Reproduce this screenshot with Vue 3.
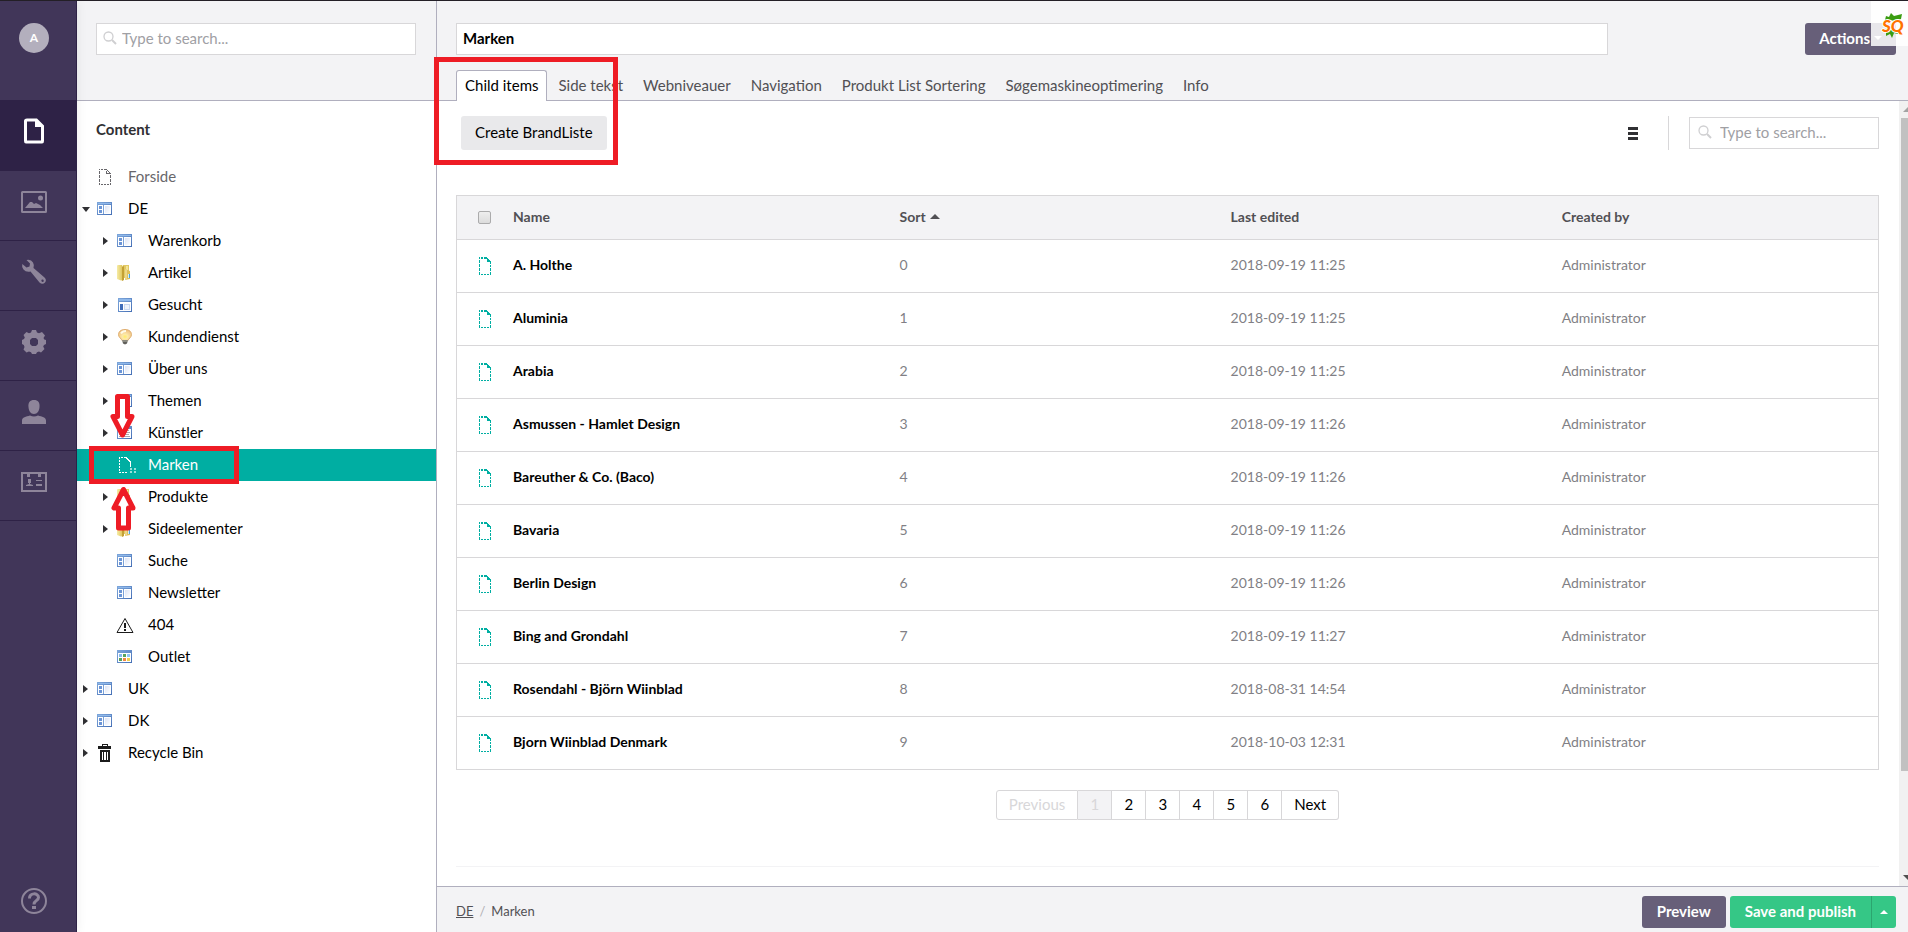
<script setup>
import { ref } from 'vue'

const sections = [
  { id: 'content', label: 'Content' },
  { id: 'media', label: 'Media' },
  { id: 'wrench', label: 'Settings' },
  { id: 'gear', label: 'Developer' },
  { id: 'user', label: 'Users' },
  { id: 'member', label: 'Members' }
]
const activeSection = ref('content')

const tree = [
  { name: 'Forside', icon: 'page', level: 1, muted: true },
  { name: 'DE', icon: 'site', level: 1, state: 'open' },
  { name: 'Warenkorb', icon: 'site', level: 2, state: 'closed' },
  { name: 'Artikel', icon: 'folder', level: 2, state: 'closed' },
  { name: 'Gesucht', icon: 'form', level: 2, state: 'closed' },
  { name: 'Kundendienst', icon: 'bulb', level: 2, state: 'closed' },
  { name: 'Über uns', icon: 'site', level: 2, state: 'closed' },
  { name: 'Themen', icon: 'site', level: 2, state: 'closed' },
  { name: 'Künstler', icon: 'text', level: 2, state: 'closed' },
  { name: 'Marken', icon: 'list', level: 2, selected: true },
  { name: 'Produkte', icon: 'folder', level: 2, state: 'closed' },
  { name: 'Sideelementer', icon: 'folder', level: 2, state: 'closed' },
  { name: 'Suche', icon: 'site', level: 2 },
  { name: 'Newsletter', icon: 'site', level: 2 },
  { name: '404', icon: 'warning', level: 2 },
  { name: 'Outlet', icon: 'apps', level: 2 },
  { name: 'UK', icon: 'site', level: 1, state: 'closed' },
  { name: 'DK', icon: 'site', level: 1, state: 'closed' },
  { name: 'Recycle Bin', icon: 'trash', level: 1, state: 'closed' }
]

const tabs = ['Child items', 'Side tekst', 'Webniveauer', 'Navigation', 'Produkt List Sortering', 'Søgemaskineoptimering', 'Info']
const activeTab = ref('Child items')
const nodeName = ref('Marken')

const items = [
  ['A. Holthe', '2018-09-19 11:25'],
  ['Aluminia', '2018-09-19 11:25'],
  ['Arabia', '2018-09-19 11:25'],
  ['Asmussen - Hamlet Design', '2018-09-19 11:26'],
  ['Bareuther & Co. (Baco)', '2018-09-19 11:26'],
  ['Bavaria', '2018-09-19 11:26'],
  ['Berlin Design', '2018-09-19 11:26'],
  ['Bing and Grondahl', '2018-09-19 11:27'],
  ['Rosendahl - Björn Wiinblad', '2018-08-31 14:54'],
  ['Bjorn Wiinblad Denmark', '2018-10-03 12:31']
]
</script>

<template>
  <div class="app">
    <svg class="defs" aria-hidden="true">
      <defs>
        <linearGradient id="g-pane" x1="0" y1="0" x2="1" y2="1">
          <stop offset="0" stop-color="#dbe3f5" /><stop offset="1" stop-color="#ffffff" />
        </linearGradient>
        <linearGradient id="g-frame" x1="0" y1="0" x2="1" y2="1">
          <stop offset="0" stop-color="#7fa8dc" /><stop offset="1" stop-color="#456fb5" />
        </linearGradient>
        <linearGradient id="g-folder" x1="0" y1="0" x2="1" y2="0">
          <stop offset="0" stop-color="#f6eca6" /><stop offset="1" stop-color="#dcc052" />
        </linearGradient>
        <radialGradient id="g-bulb" cx=".5" cy=".65" r=".6">
          <stop offset="0" stop-color="#ffee66" /><stop offset=".35" stop-color="#fde9a8" /><stop offset="1" stop-color="#efc183" />
        </radialGradient>
      </defs>

      <symbol id="i-site" viewBox="0 0 16 16">
        <g shape-rendering="crispEdges">
          <rect x="0" y="1" width="15" height="13" fill="url(#g-frame)" />
          <rect x="1" y="2" width="13" height="1" fill="#8fb8ea" />
          <rect x="1" y="4" width="13" height="9" fill="#fff" />
          <rect x="2" y="5" width="3" height="3" fill="#6b95d6" />
          <rect x="2" y="9" width="3" height="3" fill="#6b95d6" />
          <rect x="6" y="4" width="1" height="9" fill="#7ba2d8" />
          <rect x="8" y="5" width="5" height="7" fill="url(#g-pane)" />
        </g>
      </symbol>
      <symbol id="i-form" viewBox="0 0 16 16">
        <g shape-rendering="crispEdges">
          <rect x="1" y="1" width="14" height="14" fill="url(#g-frame)" />
          <rect x="2" y="2" width="12" height="2" fill="#8fb8ea" />
          <rect x="2" y="5" width="12" height="9" fill="#fff" />
          <rect x="3" y="7" width="3" height="6" fill="#3f6cb8" />
          <rect x="7" y="7" width="6" height="6" fill="#c9d8f0" />
          <rect x="8" y="8" width="4" height="4" fill="#eef3fb" />
        </g>
      </symbol>
      <symbol id="i-text" viewBox="0 0 16 16">
        <g shape-rendering="crispEdges">
          <rect x="0" y="1" width="15" height="13" fill="url(#g-frame)" />
          <rect x="1" y="4" width="13" height="9" fill="#fff" />
          <path d="M2 5h10v1H2zM2 7h11v1H2zM2 9h10v1H2zM2 11h11v1H2z" fill="#a9a9ae" />
        </g>
      </symbol>
      <symbol id="i-apps" viewBox="0 0 16 16">
        <g shape-rendering="crispEdges">
          <rect x="0" y="1" width="15" height="13" fill="url(#g-frame)" />
          <rect x="1" y="4" width="13" height="9" fill="#fff" />
          <rect x="2" y="5" width="3" height="3" fill="#85baf0" />
          <rect x="6" y="5" width="3" height="3" fill="#58a35b" />
          <rect x="10" y="5" width="3" height="3" fill="#8fc6f5" />
          <rect x="2" y="9" width="3" height="3" fill="#58a35b" />
          <rect x="6" y="9" width="3" height="3" fill="#f28645" />
          <rect x="10" y="9" width="3" height="3" fill="#f3cf4b" />
        </g>
      </symbol>
      <symbol id="i-folder" viewBox="0 0 16 16">
        <path d="M6 0H12V13H6z" fill="#e2c964" />
        <path d="M9 1H11V12H9z" fill="#f3e59a" />
        <path d="M0 1Q0 0 1 0H5L6 2V15L4 15.500 0 14z" fill="url(#g-folder)" />
        <path d="M5 2L7 1V15L5 16z" fill="#c3a035" />
        <path d="M8 4L13 6V14L8 15z" fill="#dfc05a" />
        <path d="M8 4L10 5V14L8 15z" fill="#ecd789" />
        <rect x="11" y="9" width="2" height="4" fill="#4aa3dc" />
        <rect x="11" y="9" width="1" height="4" fill="#d4ecfa" />
      </symbol>
      <symbol id="i-bulb" viewBox="0 0 16 16">
        <path d="M8 .5C3.500 .5 1.500 3 1.500 5.500c0 3 3 4 3.500 6h6c.5-2 3.500-3 3.500-6 0-2.500-2-5-6.500-5z" fill="url(#g-bulb)" stroke="#dfae70" />
        <path d="M4 4.500C5 2.500 7 2 9 2" stroke="#fffbe8" stroke-width="2" fill="none" />
        <path d="M5 11h6l-1 3.500-2 1-2-1z" fill="#61605b" />
        <path d="M5 12h6" stroke="#b7b5a7" />
      </symbol>
      <symbol id="i-page" viewBox="0 0 16 18">
        <g shape-rendering="crispEdges" fill="currentColor">
          <path d="M2 1h1v1H2zM4 1h2v1H4zM7 1h2v1H7zM2 3h1v3H2zM2 7h1v3H2zM2 11h1v3H2zM2 15h1v2H2zM4 16h2v1H4zM7 16h2v1H7zM10 16h2v1h-2zM13 15h1v2h-1zM13 11h1v3h-1zM13 7h1v3h-1zM9 1h1v1H9zM10 2h1v1h-1zM11 3h1v1h-1zM12 4h1v1h-1zM9 3h1v3H9zM10 5h4v1h-4z" />
        </g>
      </symbol>
      <symbol id="i-doc" viewBox="0 0 12 18">
        <g shape-rendering="crispEdges" fill="currentColor">
          <path d="M0 0h1v2H0zM2 0h2v2H2zM5 0h3v2H5zM8 1h1v1H8zM8 2h2v1H8zM8 3h3v1H8zM8 4h4v1H8zM0 3h1v3H0zM0 7h1v3H0zM0 11h1v3H0zM0 15h1v3H0zM2 17h2v1H2zM5 17h2v1H5zM8 17h2v1H8zM11 5h1v2h-1zM11 8h1v2h-1zM11 11h1v3h-1zM11 15h1v3h-1z" />
        </g>
      </symbol>
      <symbol id="i-list" viewBox="0 0 20 18">
        <g shape-rendering="crispEdges" fill="currentColor">
          <path d="M2 1h1v2H2zM4 1h2v1H4zM7 1h2v1H7zM2 4h1v2H2zM2 7h1v2H2zM2 10h1v2H2zM2 13h1v2H2zM2 16h2v1H2zM5 16h2v1H5zM8 16h2v1H8zM9 1h1v2H9zM10 2h1v2h-1zM11 3h1v2h-1zM12 4h1v2h-1zM13 5h1v6h-1z" />
          <path opacity=".6" d="M13 12h2v2h-2zM13 15h2v2h-2zM17 12h2v2h-2zM17 15h2v2h-2z" />
        </g>
      </symbol>
      <symbol id="i-warning" viewBox="0 0 18 16">
        <path d="M9 1.500L17 15.500H1z" fill="none" stroke="#1b1b1b" />
        <path d="M8 6h2v5H8zM8 12h2v2H8z" fill="#1b1b1b" />
      </symbol>
      <symbol id="i-trash" viewBox="0 0 16 18">
        <path d="M5 0h6v2h3v3H1V2h4zM6 1v1h4V1zM3 6h10v12H3zM5 8v8h1V8zM7 8v8h2V8zM10 8v8h1V8z" fill="#1b1b1b" fill-rule="evenodd" shape-rendering="crispEdges" />
      </symbol>
      <symbol id="i-search" viewBox="0 0 14 14">
        <circle cx="5.500" cy="5.500" r="4.500" fill="none" stroke="#cfcfd1" stroke-width="1.300" />
        <path d="M9 9L13 13" stroke="#cfcfd1" stroke-width="2" />
      </symbol>

      <symbol id="s-content" viewBox="0 0 26 26">
        <path d="M6 .5H16L23 7.500V23Q23 25.500 21 25.500H5Q3 25.500 3 23V3Q3 .5 6 .5zM6 3.500V22.500H20V9H14V3.500z" fill="currentColor" fill-rule="evenodd" />
      </symbol>
      <symbol id="s-media" viewBox="0 0 26 26">
        <path d="M1.500 2h23Q26 2 26 3.500V22.500Q26 24 24.500 24h-23Q0 24 0 22.500V3.500Q0 2 1.500 2zM2 4V22H24V4z" fill="currentColor" fill-rule="evenodd" />
        <path d="M4 19L9 13 11 13 13 15 15 14 19 16 22 19z" fill="currentColor" />
        <circle cx="19.500" cy="9" r="2.500" fill="currentColor" />
      </symbol>
      <symbol id="s-wrench" viewBox="0 0 26 26">
        <path d="M5.500 1Q10 0 12 3.500 13.500 6 12.500 9L23.500 18.500Q26 21 24 23.500 21.500 26 18.500 23.500L9.500 12.500Q5 13.500 2.500 10.500 .5 8 1.300 5L5.500 8.500 8.500 7.500 9 4.500zM21.500 20.500a1.200 1.200 0 1 0 .1 2.400 1.200 1.200 0 0 0-.1-2.400z" fill="currentColor" fill-rule="evenodd" />
      </symbol>
      <symbol id="s-gear" viewBox="0 0 26 26">
        <path d="M11 1h4l1 2.500 2 .8L21 3l3 3.500-1.500 2.500.8 1.500L25 11v4l-2 1-.8 1.500L23.500 20 20 23.500 18 22.500l-2 .8L15 25h-4l-1-1.700-2-.8L5.500 23.500 2.500 20.500 3.500 18 2.800 16 1 15v-4l2-1 .8-1.500L2.500 6 5.500 3 8 4.300l2-.8zM11 9L9 11V15L11 17H15L17 15V11L15 9z" fill="currentColor" fill-rule="evenodd" />
      </symbol>
      <symbol id="s-user" viewBox="0 0 26 26">
        <path d="M13 1c4 0 6 2.500 5.500 7-.3 4-2 7-5.500 7S7.800 12 7.500 8C7 3.500 9 1 13 1zM9 16.500q4 2 8 0c4 1 8 2 8 5V25H1v-3.500c0-3 4-4 8-5z" fill="currentColor" />
      </symbol>
      <symbol id="s-member" viewBox="0 0 26 26">
        <path d="M0 3H26V23H0zM2 5V21H24V5H20V8H17V5H9V8H6V5z" fill="currentColor" fill-rule="evenodd" />
        <path d="M7 10h3v4H9v1l3 1v1H5v-1l3-1v-1H7zM15 11h6v1h-6zM15 15h6v2h-6z" fill="currentColor" />
      </symbol>
      <symbol id="s-help" viewBox="0 0 26 26">
        <circle cx="13" cy="13" r="12" fill="none" stroke="currentColor" stroke-width="2" />
        <path d="M8.500 10.500C8 4.500 17.500 4.500 17.500 9.500 17.500 13 13 12 13 16.500M11 19.500h4" fill="none" stroke="currentColor" stroke-width="3" />
      </symbol>
    </svg>

    <nav class="rail" aria-label="Sections">
      <div class="rail-top"><button class="avatar">A</button></div>
      <a v-for="s in sections" :key="s.id" href="#" class="rail-item" :class="{ active: s.id === activeSection }"
        :aria-label="s.label" @click.prevent="activeSection = s.id">
        <svg><use :href="'#s-' + s.id" /></svg>
      </a>
      <a href="#" class="rail-help" aria-label="Help"><svg><use href="#s-help" /></svg></a>
    </nav>

    <aside class="panel">
      <div class="panel-head">
        <label class="search">
          <svg><use href="#i-search" /></svg>
          <input type="text" placeholder="Type to search..." aria-label="Search content" />
        </label>
      </div>
      <h1>Content</h1>
      <ul class="tree">
        <li v-for="n in tree" :key="n.name" class="node" :class="['level-' + n.level, { selected: n.selected, muted: n.muted }]">
          <button v-if="n.state" class="toggle" :class="n.state" :aria-label="'Toggle ' + n.name">
            <svg v-if="n.state === 'open'" width="8" height="5"><path d="M0 0H8L4 5z" /></svg>
            <svg v-else width="5" height="8"><path d="M0 0L5 4 0 8z" /></svg>
          </button>
          <span v-else class="toggle"></span>
          <a href="#"><svg class="node-icon" :class="'icon-' + n.icon"><use :href="'#i-' + n.icon" /></svg><span>{{ n.name }}</span></a>
        </li>
      </ul>
    </aside>

    <main class="editor">
      <header class="editor-head">
        <div class="name-row">
          <input v-model="nodeName" class="name" type="text" aria-label="Name" />
          <button class="btn purple">Actions <svg width="8" height="4"><path d="M0 0H8L4 4z" /></svg></button>
        </div>
        <div class="tabs" role="tablist">
          <button v-for="t in tabs" :key="t" class="tab" role="tab" :class="{ active: t === activeTab }"
            :aria-selected="t === activeTab" @click="activeTab = t">{{ t }}</button>
        </div>
      </header>

      <div class="body">
        <div class="content">
          <div class="toolbar">
            <button class="create">Create BrandListe</button>
            <button class="layout" aria-label="List layout">
              <svg width="10" height="13"><path d="M0 0H10V3H0zM0 5H10V8H0zM0 10H10V13H0z" /></svg>
            </button>
            <span class="divider"></span>
            <label class="search list-search">
              <svg><use href="#i-search" /></svg>
              <input type="text" placeholder="Type to search..." aria-label="Search list" />
            </label>
          </div>

          <table>
            <thead>
              <tr>
                <th class="c-icon"><input type="checkbox" aria-label="Select all" /></th>
                <th class="c-name">Name</th>
                <th class="c-mid">Sort <svg width="10" height="5"><path d="M5 0L10 5H0z" /></svg></th>
                <th class="c-mid">Last edited</th>
                <th>Created by</th>
              </tr>
            </thead>
            <tbody>
              <tr v-for="(item, i) in items" :key="item[0]">
                <td class="c-icon"><svg class="doc"><use href="#i-doc" /></svg></td>
                <td><a href="#">{{ item[0] }}</a></td>
                <td>{{ i }}</td>
                <td>{{ item[1] }}</td>
                <td>Administrator</td>
              </tr>
            </tbody>
          </table>

          <nav class="pager" aria-label="Pages">
            <button class="wide" disabled>Previous</button>
            <button class="current" disabled>1</button>
            <button v-for="p in 5" :key="p">{{ p + 1 }}</button>
            <button class="wide">Next</button>
          </nav>
          <hr />
        </div>
        <div class="scroll" aria-hidden="true">
          <svg width="10" height="17"><path d="M4 11L9 6V11z" fill="#a3a3a3" /></svg>
          <div class="track"><div class="thumb"></div></div>
          <svg width="10" height="17"><path d="M4 6H10V12z" fill="#505050" /></svg>
        </div>
      </div>

      <footer class="editor-foot">
        <div class="crumbs"><a href="#">DE</a><span class="slash">/</span><span>Marken</span></div>
        <button class="btn purple">Preview</button>
        <div class="split">
          <button class="btn green">Save and publish</button>
          <button class="btn green more" aria-label="More publishing options"><svg width="8" height="4"><path d="M4 0L8 4H0z" /></svg></button>
        </div>
      </footer>
    </main>

    <div class="badge">
      <svg width="26" height="26" viewBox="0 0 26 26">
        <path d="M3 7L4 3 7 4 9 0 12 3 20 1 19 6 16 8zM4 18L7 17 15 17 16 21 12 20 10 25 8 21 4 23z" fill="#3a9c10" />
        <text x="0" y="19">SQ</text>
      </svg>
    </div>

    <div class="mark mark-tab"></div>
    <div class="mark mark-node"></div>
    <svg class="arrow arrow-down" viewBox="0 0 25 45"><path d="M7.500 2.500H17.500V22.500H22L12.500 41 3 22.500H7.500z" /></svg>
    <svg class="arrow arrow-up" viewBox="0 0 25 45"><path d="M7.500 41H17.500V21H22L12.500 2.500 3 21H7.500z" /></svg>
  </div>
</template>

<style>
body { margin: 0; overflow: hidden; }
</style>

<style scoped>
.app, .app * { box-sizing: border-box; }
.app {
  position: relative;
  display: flex;
  height: 100vh;
  overflow: hidden;
  border-top: 1px solid #231f26;
  background: #fff;
  color: #000;
  font: 15px/20px Lato, "Liberation Sans", sans-serif;
}
.defs { position: absolute; width: 0; height: 0; }
button, input { font: inherit; margin: 0; border: 0; padding: 0; outline: 0; }
button { background: none; color: inherit; cursor: pointer; }
a { color: inherit; text-decoration: none; }
svg { display: block; flex: none; }

/* section rail */
.rail { z-index: 1; flex: none; width: 77px; display: flex; flex-direction: column; background: #413659; border-right: 1px solid #2e2246; box-shadow: 0 0 10px rgba(0, 0, 0, 0.08); color: #8e859a; }
.rail-top { height: 99px; padding: 22px 0 0 19px; }
.avatar { width: 30px; height: 30px; border-radius: 50%; background: #b3afbd; color: #fff; font-size: 12px; font-weight: 700; }
.rail-item { height: 70px; padding: 0 8px 8px 0; display: flex; align-items: center; justify-content: center; border-bottom: 1px solid #2e2246; }
.rail-item.active { height: 71px; background: #2e2246; color: #fff; }
.rail svg { width: 26px; height: 26px; }
.rail-help { margin: auto 0 18px 21px; }

/* tree panel */
.panel { flex: none; width: 360px; border-right: 1px solid #b0afbe; }
.panel-head { height: 100px; padding: 22px 20px 0 19px; background: #f3f3f5; border-bottom: 1px solid #b0afbe; }
.search { display: flex; align-items: center; gap: 5px; height: 32px; padding: 0 6px 2px; border: 1px solid #d8d7d9; background: #fff; }
.search svg { width: 14px; height: 14px; }
.search input { flex: 1; min-width: 0; background: none; }
.search input::placeholder { color: #a0a0a4; opacity: 1; }
h1 { margin: 17px 0 21px 19px; font-size: 15px; line-height: 22px; font-weight: 700; color: #303033; }
.tree { list-style: none; margin: 0; padding: 0; }
.node { display: flex; align-items: center; height: 32px; }
.level-1 { padding-left: 6px; }
.level-2 { padding-left: 26px; }
.node.muted { color: #68676b; }
.node.selected { background: #00aea2; color: #fff; }
.toggle { flex: none; width: 14px; height: 32px; display: flex; align-items: center; fill: #303033; }
.toggle.open svg { margin-left: -1px; }
.node a { flex: 1; display: flex; align-items: center; gap: 15px; }
.node span { padding-bottom: 2px; }
.node-icon { width: 16px; height: 16px; overflow: visible; }
.icon-page, .icon-trash { height: 18px; }
.icon-list { width: 20px; height: 18px; margin-right: -4px; }
.icon-warning { width: 18px; margin: 0 -1px; }

/* editor */
.editor { flex: 1; min-width: 0; display: flex; flex-direction: column; }
.editor-head { flex: none; height: 100px; padding: 22px 12px 0 19px; display: flex; flex-direction: column; justify-content: space-between; background: #f3f3f5; border-bottom: 1px solid #b0afbe; }
.name-row { display: flex; justify-content: space-between; }
.name { width: 80%; height: 32px; padding: 0 6px 2px; border: 1px solid #d8d7d9; background: #fff; font-weight: 700; }
.btn { height: 32px; padding: 0 14px 2px; border-radius: 3px; color: #fff; font-weight: 700; display: flex; align-items: center; gap: 4px; fill: #fff; }
.purple { background: #675f79; }
.green { background: #35c786; }
.tabs { display: flex; gap: 2px; margin-bottom: -1px; }
.tab { height: 31px; padding: 0 8px 2px; border: 1px solid transparent; border-bottom: 0; border-radius: 3px 3px 0 0; color: #515054; white-space: nowrap; }
.tab.active { background: #fff; border-color: #b0afbe; color: #000; }

.body { flex: 1; min-height: 0; display: flex; }
.content { flex: 1; min-width: 0; overflow: hidden; padding: 15px 20px 0 19px; }
.toolbar { display: flex; align-items: center; height: 34px; margin-bottom: 45px; }
.create { height: 34px; padding: 0 14px 2px; margin-left: 5px; border-radius: 3px; background: #e9e9eb; }
.layout { margin-left: auto; padding: 0 30px; fill: #303033; }
.divider { width: 1px; height: 34px; background: #d8d7d9; }
.list-search { width: 190px; margin-left: 20px; padding-left: 8px; gap: 8px; }

table { width: 100%; table-layout: fixed; border-collapse: separate; border-spacing: 0; border: 1px solid #d8d7d9; font-size: 14px; }
th, td { padding: 0 0 2px; text-align: left; }
th { height: 43px; background: #f3f3f5; color: #515054; font-weight: 700; }
th svg { display: inline-block; margin-left: 1px; vertical-align: 3px; fill: #515054; }
td { height: 53px; border-top: 1px solid #d8d7d9; color: #817f85; }
td a { color: #000; font-weight: 700; }
.c-icon { width: 56px; padding: 0 0 0 22px; }
.c-name { width: 27.2%; }
.c-mid { width: 23.3%; }
.doc { width: 12px; height: 18px; color: #00aea2; }
.c-icon input { appearance: none; display: block; width: 13px; height: 13px; margin-left: -1px; border: 1px solid #ababac; border-radius: 2px; background: linear-gradient(#eeeeee, #dcdcdc); }

.pager { display: flex; justify-content: center; margin: 20px 0 46px; }
.pager button { width: 34px; height: 30px; padding: 0 0 2px; border: 1px solid #d8d7d9; border-left-width: 0; color: #000; }
.pager .wide { width: auto; padding: 0 12px 2px; }
.pager button:first-child { border-left-width: 1px; border-radius: 3px 0 0 3px; }
.pager button:last-child { border-radius: 0 3px 3px 0; }
.pager button:disabled { color: #d8d7d9; }
.pager .current { background: #f3f3f5; }
hr { margin: 0; border: 0; height: 1px; background: #f3f3f5; }

.scroll { flex: none; width: 9px; overflow: hidden; display: flex; flex-direction: column; background: #f1f1f1; }
.track { flex: 1; padding-left: 2px; }
.thumb { height: 87%; background: #c1c1c1; }

.editor-foot { flex: none; height: 46px; padding: 5px 12px 0 19px; display: flex; align-items: center; gap: 4px; background: #f3f3f5; border-top: 1px solid #b0afbe; }
.crumbs { flex: 1; display: flex; gap: 6px; padding-bottom: 2px; font-size: 13px; color: #515054; }
.crumbs a { text-decoration: underline; }
.slash { color: #b0afb3; }
.split { display: flex; }
.split .btn:first-child { border-radius: 3px 0 0 3px; }
.split .more { padding: 0 8px; border-left: 1px solid #2ba56f; border-radius: 0 3px 3px 0; }
.editor-foot .btn:not(.more) { padding: 0 15px 2px; }

/* overlays */
.badge { position: absolute; top: 0; right: 0; width: 37px; height: 45px; padding: 12px 0 0 11px; background: rgba(255, 255, 255, 0.85); }
.badge svg { overflow: visible; }
.badge text { font: italic 900 17px Lato, sans-serif; fill: #ff7200; stroke: #fff; stroke-width: 2px; paint-order: stroke; }
.mark { position: absolute; border: 5px solid #ee1c25; pointer-events: none; z-index: 2; }
.mark-tab { left: 434px; top: 56px; width: 184px; height: 108px; }
.mark-node { left: 89px; top: 445px; width: 150px; height: 38px; }
.arrow { position: absolute; z-index: 2; width: 25px; height: 45px; fill: #fff; stroke: #ee1c25; stroke-width: 5; stroke-linejoin: round; pointer-events: none; }
.arrow-down { left: 110px; top: 393px; }
.arrow-up { left: 111px; top: 486px; }
</style>
